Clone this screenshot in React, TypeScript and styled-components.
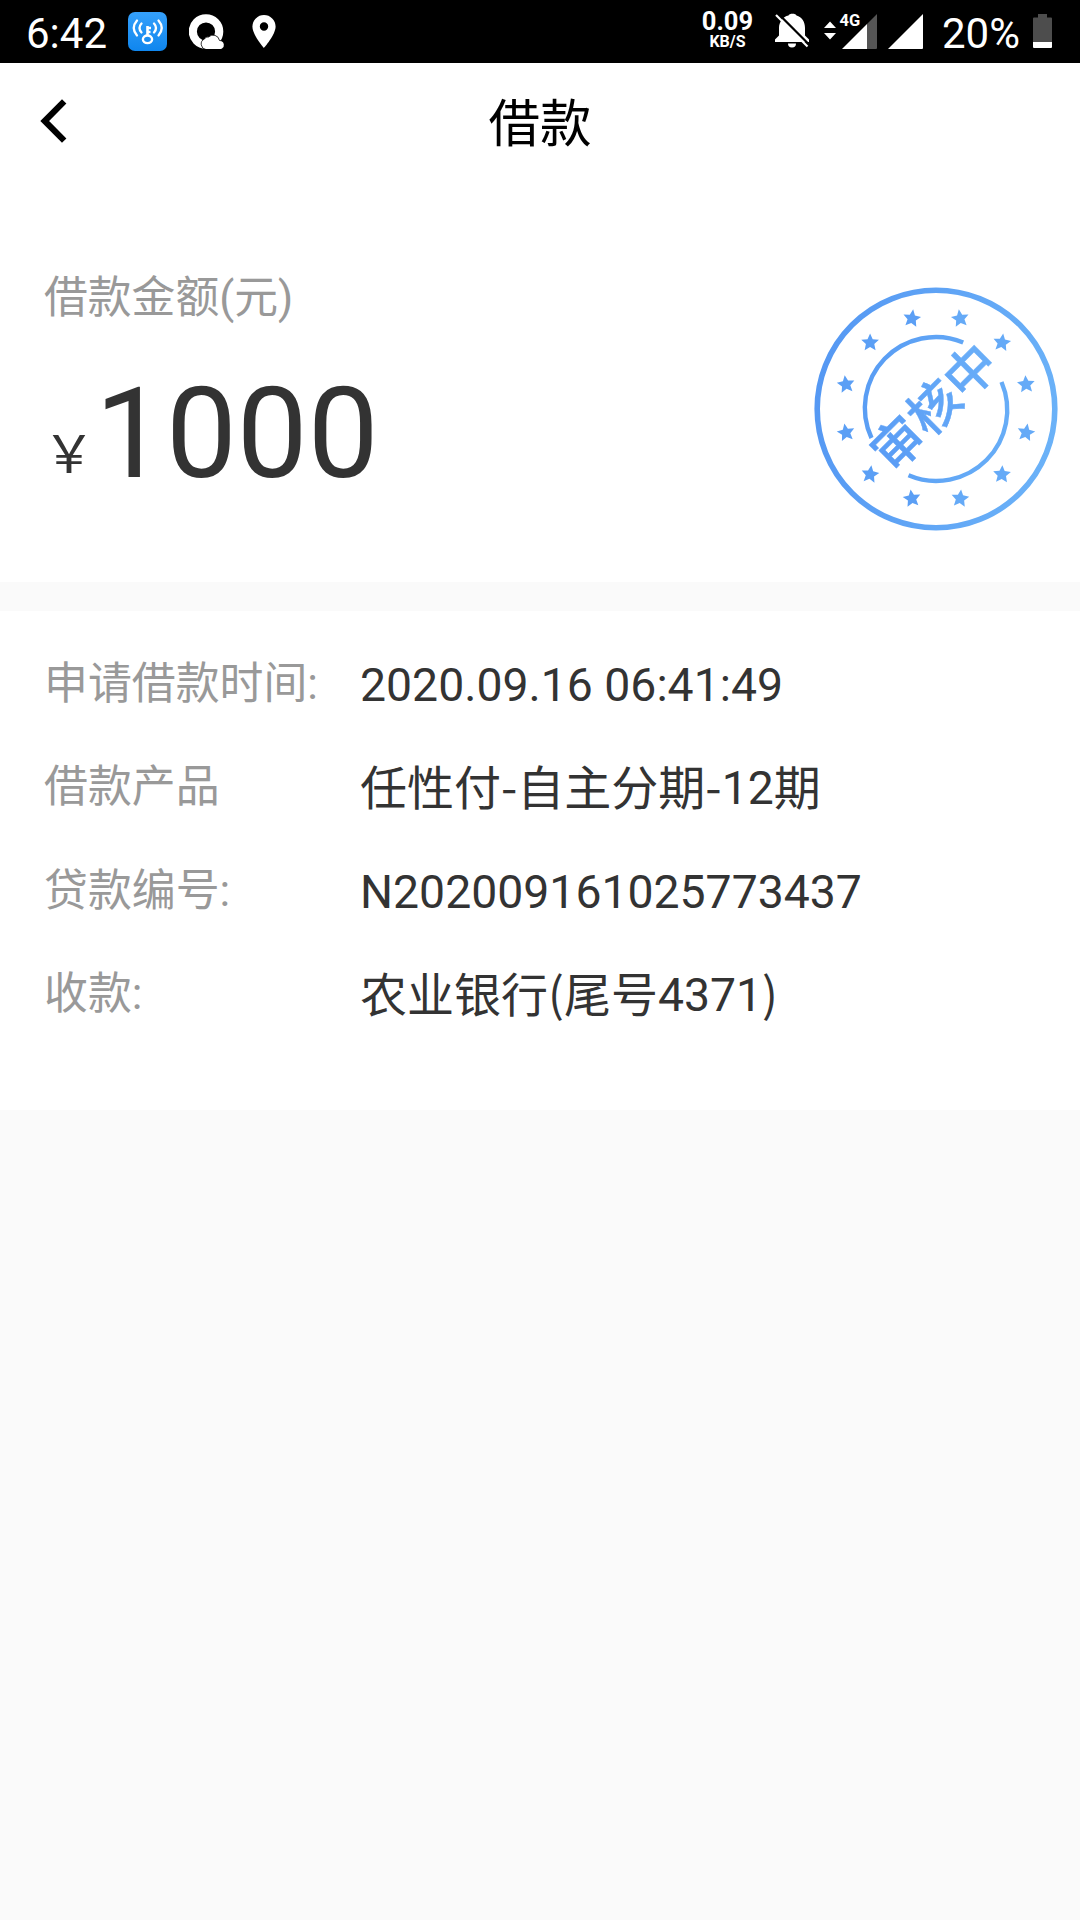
import React from 'react';
import styled, { createGlobalStyle } from 'styled-components';

const colors = {
    text: '#333333',
    label: '#999999',
    background: '#fafafa',
    white: '#ffffff',
};

const GlobalStyle = createGlobalStyle`
  body {
    margin: 0;
    background: ${colors.background};
    font-family: Roboto, 'Noto Sans CJK SC', sans-serif;
  }
`;

const Page = styled.div`
  display: flex;
  flex-direction: column;
  width: 1080px;
  height: 1920px;
  overflow: hidden;
  background: ${colors.background};
`;

const StatusBar = styled.div`
  display: flex;
  justify-content: space-between;
  height: 63px;
  box-sizing: border-box;
  padding: 0 28px 0 26px;
  background: black;
  color: white;
`;

const StatusGroup = styled.div`
  display: flex;
  align-items: flex-start;
`;

const StatusText = styled.span<{ $width: number; $left?: number }>`
  width: ${(p) => p.$width}px;
  margin: 9px 0 0 ${(p) => p.$left || 0}px;
  font-size: 42px;
  line-height: 49px;
  white-space: nowrap;
`;

const StatusIcon = styled.svg<{ $left: number; $top: number }>`
  display: block;
  flex: none;
  margin: ${(p) => p.$top}px 0 0 ${(p) => p.$left}px;
`;

const NetSpeed = styled.div`
  display: flex;
  flex-direction: column;
  align-items: center;
  width: 53px;
  margin: 9px 1px 0 0;
  font-weight: 700;
`;

const SpeedValue = styled.span`
  font-size: 25.5px;
  line-height: 24px;
`;

const SpeedUnit = styled.span`
  font-size: 16px;
  line-height: 17px;
`;

const Header = styled.header`
  display: grid;
  grid-template-columns: 100px 1fr 100px;
  align-items: center;
  height: 119px;
  background: ${colors.white};
`;

const BackButton = styled.button`
  display: flex;
  padding: 0 0 3px 40px;
  border: none;
  background: none;
`;

const Title = styled.h1`
  margin: 0;
  padding-top: 4px;
  font-size: 51.5px;
  font-weight: 400;
  line-height: 76px;
  text-align: center;
  color: black;
`;

const AmountSection = styled.section`
  display: flex;
  justify-content: space-between;
  height: 400px;
  box-sizing: border-box;
  padding: 84px 22px 0 44px;
  background: ${colors.white};
`;

const AmountLabel = styled.p`
  margin: 0;
  font-size: 43.8px;
  line-height: 64px;
  color: ${colors.label};
`;

const Amount = styled.p`
  margin: 30px 0 0 -1px;
  font-size: 126.2px;
  line-height: 148px;
  white-space: nowrap;
  color: ${colors.text};
`;

const Currency = styled.span`
  display: inline-block;
  width: 52px;
  font-size: 52px;
  line-height: 1;
  vertical-align: 4px;
`;

const Stamp = styled.svg`
  display: block;
  margin-top: 21px;
`;

const Details = styled.section`
  height: 499px;
  box-sizing: border-box;
  margin-top: 29px;
  padding: 41px 44px 0;
  background: ${colors.white};
`;

const DetailRow = styled.div`
  display: grid;
  grid-template-columns: 316px 1fr;
  height: 103.3px;
`;

const DetailLabel = styled.span`
  font-size: 43.9px;
  line-height: 64px;
  white-space: nowrap;
  color: ${colors.label};
`;

const DetailValue = styled.span`
  font-size: 46.35px;
  line-height: 67px;
  white-space: nowrap;
  color: ${colors.text};
`;

const Han = styled.span`
  font-family: 'Noto Sans CJK SC', sans-serif;
  font-size: 47px;
  line-height: 1;
  vertical-align: -1px;
`;

const details = [
    { label: '申请借款时间:', value: '2020.09.16 06:41:49' },
    { label: '借款产品', value: '任性付-自主分期-12期' },
    { label: '贷款编号:', value: 'N202009161025773437' },
    { label: '收款:', value: '农业银行(尾号4371)' },
];

// chinese text keeps its own punctuation, digits stay in Roboto
const renderValue = (value: string) => {
    if (!/[\u4e00-\u9fff]/.test(value)) {
        return value;
    }
    return value.split(/(\d+)/).map((part, i) => (i % 2 ? part : <Han key={i}>{part}</Han>));
};

// five pointed star around 0,0
const starPoints = Array.from({ length: 10 }, (_, i) => {
    const r = i % 2 ? 4.4 : 9.3;
    const a = (Math.PI / 5) * i - Math.PI / 2;
    return `${(r * Math.cos(a)).toFixed(2)},${(r * Math.sin(a)).toFixed(2)}`;
}).join(' ');

// tilt of every star, clockwise from the one on the right below the middle
const tilts = [10, 3, 6, -8, 8, -10, -8, 0, 8, -8, 8, -4];

const stars = tilts.map((tilt, i) => {
    const rad = ((15 + i * 30) * Math.PI) / 180;
    return { tilt, x: 122 + 93.2 * Math.cos(rad), y: 121.6 + 93.2 * Math.sin(rad) };
});

const ReviewStamp = () => (
    <Stamp width="244" height="244" viewBox="0 0 244 244">
        <defs>
            <linearGradient id="stampBlue" gradientUnits="userSpaceOnUse" x1="0" y1="100" x2="244" y2="144">
                <stop offset="0" stopColor="#5598f3"/>
                <stop offset="1" stopColor="#6bb2f8"/>
            </linearGradient>
            <linearGradient id="stampText" gradientUnits="userSpaceOnUse" x1="-78" y1="0" x2="78" y2="0">
                <stop offset="0" stopColor="#5a9cf5"/>
                <stop offset="1" stopColor="#69aef8"/>
            </linearGradient>
        </defs>
        <g fill="none" stroke="url(#stampBlue)">
            <circle cx="122" cy="122" r="118.8" strokeWidth="5.6"/>
            <path d="M149.2 55.5A71 71 0 0 0 57.5 151" strokeWidth="4.4"/>
            <path d="M94.5 188.3A71 71 0 0 0 187.5 95" strokeWidth="4.4"/>
        </g>
        {stars.map((s, i) => (
            <polygon
                key={i}
                points={starPoints}
                fill={s.x < 122 ? '#5b9ff5' : '#65aaf7'}
                transform={`translate(${s.x} ${s.y}) rotate(${s.tilt})`}
            />
        ))}
        <text
            transform="translate(120 120) rotate(-45)"
            x="0"
            y="19"
            textAnchor="middle"
            fontFamily="'Noto Sans CJK SC', sans-serif"
            fontSize="51.3"
            fontWeight="500"
            fill="url(#stampText)"
            stroke="url(#stampText)"
            strokeWidth="0.4"
        >
            审核中
        </text>
    </Stamp>
);

const WifiKeyIcon = () => (
    <StatusIcon $left={18} $top={12} width="39" height="39" viewBox="0 0 39 39">
        <defs>
            <linearGradient id="keyBlue" x1="0" y1="0" x2="0" y2="1">
                <stop offset="0" stopColor="#35a0fb"/>
                <stop offset="1" stopColor="#0f86ee"/>
            </linearGradient>
        </defs>
        <rect width="39" height="39" rx="7" fill="url(#keyBlue)"/>
        <g fill="none" stroke="white" strokeWidth="2.3" strokeLinecap="round">
            <ellipse cx="19.5" cy="27.3" rx="4.6" ry="3.8" strokeWidth="2.4"/>
            <path d="M19.5 23.5V14M20 16h3M20 20h2.5" strokeWidth="2.6" strokeLinecap="butt"/>
            <path d="M13.5 11.5Q9.5 16 13.5 20.5M9 8.5Q2.5 16 9 23.5"/>
            <path d="M26 11.5Q30 16 26 20.5M30.5 8.5Q37 16 30.5 23.5"/>
        </g>
    </StatusIcon>
);

const CloudQIcon = () => (
    <StatusIcon $left={22} $top={14} width="35" height="35" viewBox="0 0 35 35">
        <circle cx="17" cy="17.5" r="13.2" fill="none" stroke="white" strokeWidth="8.2"/>
        <path
            d="M17 35.5a5.5 5.5 0 0 1-1.5-10.5 3.5 3.5 0 0 1 4-2 6.5 6.5 0 0 1 11 3.5 4.5 4.5 0 0 1 .5 9z"
            fill="white"
            stroke="black"
            strokeWidth="0.8"
        />
        <path d="M14 29h18v6H17z" fill="white"/>
    </StatusIcon>
);

const PinIcon = () => (
    <StatusIcon $left={28} $top={15} width="24" height="33" viewBox="0 0 24 33">
        <path
            d="M12 0A11.6 11.6 0 0 0 .4 11.6C.4 20 12 33 12 33S23.6 20 23.6 11.6A11.6 11.6 0 0 0 12 0zm0 15.7a4.2 4.2 0 1 1 0-8.4 4.2 4.2 0 0 1 0 8.4z"
            fill="white"
        />
    </StatusIcon>
);

const MutedBellIcon = () => (
    <StatusIcon $left={20} $top={13} width="36" height="36" viewBox="0 0 36 36">
        <path
            d="M0 29v-2.5l4-4V15C4 9 8 3.5 13.5 2.5 14 .2 21 .2 21.5 2.5 27 4 30 9 30 15v7.5l4 4V29zM13 30.5h8a4 4 0 0 1-8 0z"
            fill="white"
        />
        <path d="M3 .5L34.5 32" stroke="black" strokeWidth="2.3"/>
        <path d="M1 2L32.5 33.5" stroke="white" strokeWidth="2.2"/>
    </StatusIcon>
);

const MobileDataIcon = () => (
    <StatusIcon $left={13} $top={5} width="53" height="44" viewBox="0 -8 53 44">
        <path d="M0 15L6 8.5 12 15zM0 20h12L6 26.5z" fill="white"/>
        <path d="M43 11L53 1v34a1 1 0 0 1-1 1h-9z" fill="#555555"/>
        <path d="M18 36L43 11v25z" fill="white"/>
        <text x="15.5" y="13" fontSize="16.5" fontWeight="700" fill="white">4G</text>
    </StatusIcon>
);

const SignalIcon = () => (
    <StatusIcon $left={11} $top={14} width="35" height="35" viewBox="0 0 35 35">
        <path d="M0 35L35 0v34a1 1 0 0 1-1 1z" fill="white"/>
    </StatusIcon>
);

const BatteryIcon = () => (
    <StatusIcon $left={10} $top={14} width="19" height="34" viewBox="0 0 19 34">
        <path d="M5 0h9v3.500h4a1 1 0 0 1 1 1V28H0V4.500a1 1 0 0 1 1-1h4z" fill="#4d4d4d"/>
        <path d="M0 28h19v5a1 1 0 0 1-1 1H1a1 1 0 0 1-1-1z" fill="white"/>
    </StatusIcon>
);

export default () => {
    return (
        <>
            <GlobalStyle/>
            <Page>
                <StatusBar>
                    <StatusGroup>
                        <StatusText $width={84}>6:42</StatusText>
                        <WifiKeyIcon/>
                        <CloudQIcon/>
                        <PinIcon/>
                    </StatusGroup>
                    <StatusGroup>
                        <NetSpeed>
                            <SpeedValue>0.09</SpeedValue>
                            <SpeedUnit>KB/S</SpeedUnit>
                        </NetSpeed>
                        <MutedBellIcon/>
                        <MobileDataIcon/>
                        <SignalIcon/>
                        <StatusText $width={81} $left={19}>20%</StatusText>
                        <BatteryIcon/>
                    </StatusGroup>
                </StatusBar>

                <Header>
                    <BackButton aria-label="返回">
                        <svg width="27" height="44" viewBox="0 0 27 44">
                            <path d="M24.2 2.4L4.7 22l19.5 19.6" fill="none" stroke="black" strokeWidth="6.2"/>
                        </svg>
                    </BackButton>
                    <Title>借款</Title>
                </Header>

                <AmountSection>
                    <div>
                        <AmountLabel>借款金额(元)</AmountLabel>
                        <Amount>
                            <Currency>￥</Currency>
                            1000
                        </Amount>
                    </div>
                    <ReviewStamp/>
                </AmountSection>

                <Details>
                    {details.map((row) => (
                        <DetailRow key={row.label}>
                            <DetailLabel>{row.label}</DetailLabel>
                            <DetailValue>{renderValue(row.value)}</DetailValue>
                        </DetailRow>
                    ))}
                </Details>
            </Page>
        </>
    );
};
